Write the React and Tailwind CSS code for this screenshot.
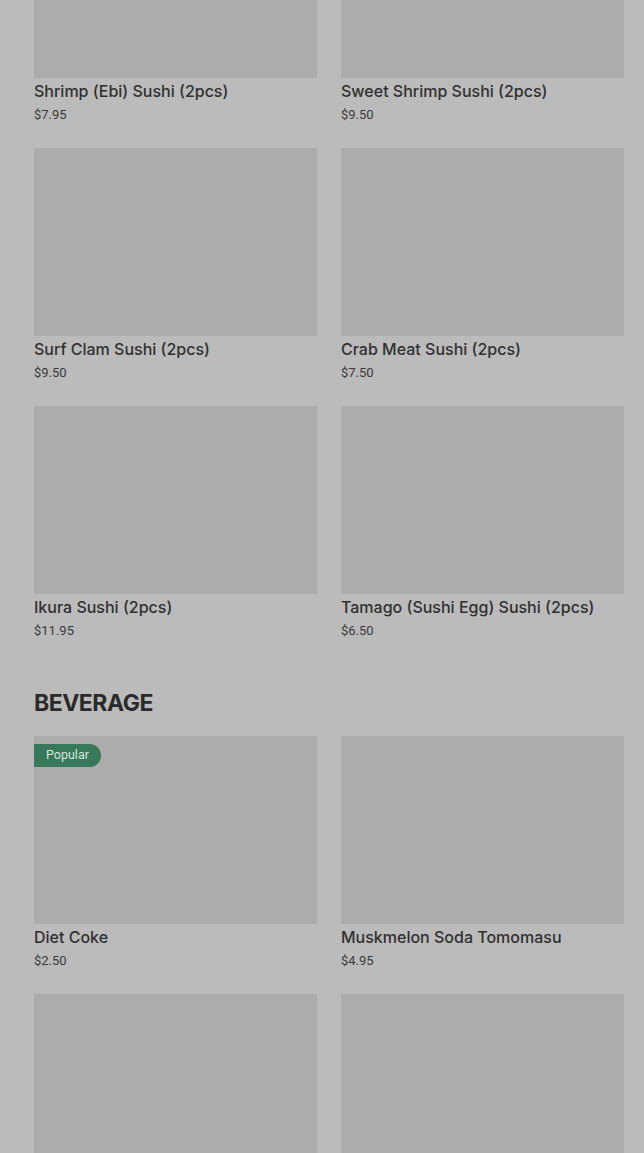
import React from "react";

const sushi = [
  ["Shrimp (Ebi) Sushi (2pcs)", "$7.95"],
  ["Sweet Shrimp Sushi (2pcs)", "$9.50"],
  ["Surf Clam Sushi (2pcs)", "$9.50"],
  ["Crab Meat Sushi (2pcs)", "$7.50"],
  ["Ikura Sushi (2pcs)", "$11.95"],
  ["Tamago (Sushi Egg) Sushi (2pcs)", "$6.50"],
];

const bev = [
  ["Diet Coke", "$2.50", true],
  ["Muskmelon Soda Tomomasu", "$4.95"],
  ["", ""],
  ["", ""],
];

function Card({ name, price, popular }) {
  return (
    <div className="flex flex-col">
      <div className="relative h-[188px] bg-[#acacac]">
        {popular && (
          <span className="absolute left-0 top-[8px] h-[23px] flex items-center pl-[12px] pr-[12px] rounded-r-full bg-[#37795a] text-[12.5px] text-[#d8e6de]">
            Popular
          </span>
        )}
      </div>
      <div className="mt-[1px] h-[24px] text-[16px] leading-[24px] font-medium text-[#303030]" style={{ fontFamily: "Inter, 'Liberation Sans', sans-serif" }}>{name}</div>
      <div className="mt-[2px] h-[19px] text-[13px] leading-[19px] text-[#3a3a3a]">{price}</div>
    </div>
  );
}

export default function App() {
  return (
    <div className="w-full h-[1153px] overflow-hidden bg-[#bbbbbb]" style={{ fontFamily: "Roboto, 'Liberation Sans', sans-serif" }}>
      <div className="-mt-[110px] pl-[34px] pr-[20px]">
        <div className="grid grid-cols-2 gap-x-[24px] gap-y-[24px]">
          {sushi.map(([n, p], i) => (
            <Card key={i} name={n} price={p} />
          ))}
        </div>
        <h2 className="mt-[49px] mb-[19px] h-[28px] text-[23px] leading-[28px] font-bold tracking-[-0.5px] text-[#2a2a2a]" style={{ fontFamily: "Inter, 'Liberation Sans', sans-serif" }}>
          BEVERAGE
        </h2>
        <div className="grid grid-cols-2 gap-x-[24px] gap-y-[24px]">
          {bev.map(([n, p, pop], i) => (
            <Card key={i} name={n} price={p} popular={pop} />
          ))}
        </div>
      </div>
    </div>
  );
}
